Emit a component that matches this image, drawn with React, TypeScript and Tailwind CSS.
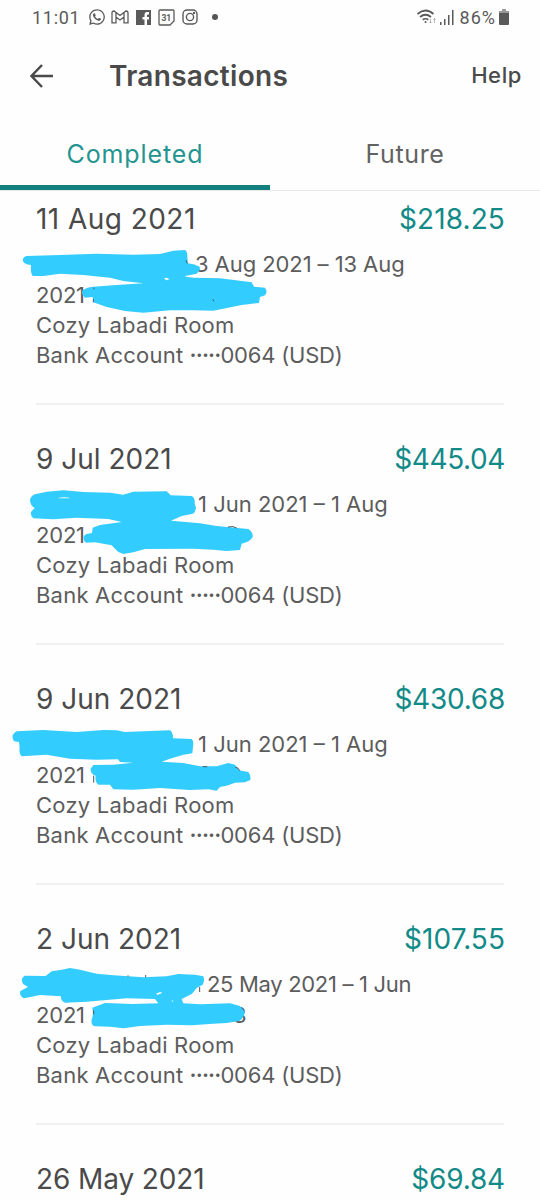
import { FaWhatsapp } from 'react-icons/fa';

type Transaction = {
  date: string;
  amount: string;
  dateSpacing?: number;
  amountSpacing?: number;
  staySpacing?: number;
  stay?: string;
  indent?: number;
  tail?: string;
  scribble?: string;
  gaps?: string; // bare slivers the marker missed
  specks?: string; // bits of lettering that peek out
};

const transactions: Transaction[] = [
  {
    date: '11 Aug 2021',
    dateSpacing: 0.45,
    amount: '$218.25',
    amountSpacing: 0.1,
    stay: '3 Aug 2021 – 13 Aug',
    staySpacing: -0.08,
    indent: 159,
    scribble:
      'M80 183 L180 180 L290 176 L400 179 L480 177 L520 167 L555 165 Q563 170 562 185 L564 205 Q585 208 599 215 Q602 228 590 236 L555 243 Q554 247 580 248 L660 250 L755 262 L762 275 L795 278 Q804 290 795 301 L780 306 L777 324 L725 330 L640 347 L580 346 L510 346 L430 353 L375 348 L320 336 L280 322 L278 306 L255 308 Q244 300 246 288 Q256 277 280 275 L350 270 L430 265 L370 258 L330 248 L250 240 L180 236 L130 243 L98 243 Q91 234 93 210 Q70 208 68 195 Q70 185 80 183 Z',
    gaps: 'M492 251 Q500 245 508 253 L500 256 Z',
    specks: 'M558 196 L562 205 M282 278 V283 M280 312 V322 M638 313 L642 319',
  },
  {
    date: '9 Jul 2021',
    amount: '$445.04',
    amountSpacing: -0.4,
    stay: '1 Jun 2021 – 1 Aug',
    indent: 162,
    scribble:
      'M105 178 L140 170 L190 166 L250 171 L330 173 L370 179 L400 170 L500 169 L512 181 L575 183 Q586 189 584 205 L588 218 Q586 235 575 237 L545 243 L513 257 L600 265 L650 273 L745 282 Q760 292 758 306 Q750 321 725 326 L720 345 L680 348 L640 344 L580 341 L435 342 L400 352 L370 357 L354 350 L335 331 L285 322 L258 323 Q248 315 252 303 Q256 296 276 294 L278 278 L300 270 L365 261 L325 252 L230 248 L160 253 L100 250 Q91 243 93 231 L104 219 Q90 211 90 195 Q92 183 105 178 Z',
    gaps: 'M172 190 Q190 184 208 188 L208 190 Z',
    specks: 'M684 276 Q700 272 710 279',
  },
  {
    date: '9 Jun 2021',
    amount: '$430.68',
    amountSpacing: -0.25,
    stay: '1 Jun 2021 – 1 Aug',
    indent: 162,
    scribble:
      'M50 169 L130 165 L230 171 L310 165 L350 166 L375 171 L470 167 L510 166 Q520 174 519 190 L575 192 Q582 197 579 215 L577 235 L550 239 L510 251 L485 260 L550 264 L600 274 L650 274 L685 264 L705 269 L717 286 L745 291 Q753 300 751 315 L735 322 L705 323 L680 332 L660 336 L650 347 L625 343 L570 345 L480 339 L400 344 L340 343 L330 329 L295 329 Q284 322 287 302 Q270 296 272 281 L280 270 L340 269 L400 263 L360 261 L354 253 L290 254 L210 251 L140 239 L65 244 Q56 236 59 220 L57 201 L42 199 Q30 180 50 169 Z',
    specks: 'M281 302 V323 M706 277 Q716 277 719 287 M608 275 H622',
  },
  {
    date: '2 Jun 2021',
    amount: '$107.55',
    amountSpacing: 0.05,
    stay: '25 May 2021 – 1 Jun',
    staySpacing: -0.32,
    indent: 171,
    tail: '3',
    scribble:
      'M74 182 L137 183 L155 169 L185 164 L210 159 L240 164 L290 176 L340 181 L430 187 L500 184 L535 177 L585 179 L610 184 Q615 196 608 209 L590 219 L576 236 L545 252 L550 265 L600 268 L690 265 L720 273 L734 290 Q735 306 718 318 L680 324 L640 326 L575 331 L500 329 L420 333 L370 340 L330 335 L285 334 Q272 331 275 312 Q281 303 277 278 L315 264 L400 267 L475 265 L465 252 L380 250 L260 260 L195 263 Q182 258 183 244 L120 240 L72 250 Q57 243 61 228 L84 216 L69 207 Q60 190 74 182 Z',
    gaps: 'M468 236 L482 230 L486 234 L472 240 Z M514 259 L518 256 L520 260 Z',
    specks: 'M384 181 V185 M437 180 V187 M599 216 V231 M281 286 V298',
  },
  { date: '26 May 2021', dateSpacing: -0.1, amount: '$69.84', amountSpacing: -0.2 },
];

function StatusBar() {
  return (
    <div className="flex h-[34px] items-center justify-between pl-8 pr-[31px] font-[Roboto] text-[18px] text-[#5a5a5a]">
      <div className="flex items-center">
        <span className="w-14 tracking-[0.7px]">11:01</span>
        <FaWhatsapp size={18} />
        <svg className="ml-[5px]" width="18" height="14" viewBox="0 0 18 14" fill="none" stroke="currentColor" strokeWidth="1.3">
          <path d="M1 12.8V3Q1 1 3 1L9 5.5L15 1Q17 1 17 3V12.8H13V7L9 10L5 7V12.8Z M5 7V3 M13 7V3" />
        </svg>
        <svg className="ml-[7px]" width="15" height="15" viewBox="0 0 15 15">
          <path d="M0 0H15V15H11V9.5H13V7H11V5.5Q11 4.5 12 4.5H13V2H11Q8.5 2 8.5 5V7H6.5V9.5H8.5V15H0Z" fill="currentColor" />
        </svg>
        <svg className="ml-[7px]" width="17" height="17" viewBox="0 0 17 17" fill="none" stroke="currentColor" strokeWidth="1.3">
          <path d="M2 1H15Q16 1 16 2V12L12 16H2Q1 16 1 15V2Q1 1 2 1Z" />
          <text x="8.3" y="11.5" textAnchor="middle" fontSize="8.5" fontWeight="700" fill="currentColor" stroke="none">31</text>
        </svg>
        <svg className="ml-[7px]" width="16" height="16" viewBox="0 0 16 16" fill="none" stroke="currentColor" strokeWidth="1.4">
          <rect x="1" y="1" width="14" height="14" rx="4" />
          <circle cx="8" cy="8" r="3.6" />
          <circle cx="12" cy="4" r=".5" />
        </svg>
        <span className="ml-[14px] size-[6px] rounded-full bg-[#555]" />
      </div>
      <div className="flex items-center">
        <svg width="20" height="16" viewBox="0 0 20 16" fill="none" stroke="currentColor" strokeWidth="1.7">
          <path d="M0.5 5Q8.5 -2 16.5 5 M3 8Q8.5 3.5 14 8 M5.7 10.8Q8.5 8.7 11.3 10.8" />
          <circle cx="8.5" cy="13" r="1" fill="currentColor" stroke="none" />
          <path d="M13.5 10V14 M12.3 12.8L13.5 14L14.7 12.8 M17.5 14V9.5 M16.3 10.8L17.5 9.5L18.7 10.8" strokeWidth=".8" opacity=".5" />
        </svg>
        <svg className="ml-[3px]" width="14" height="15" viewBox="0 0 14 15" fill="currentColor">
          <path d="M0 12H1.5V15H0Z M4 9H5.5V15H4Z M8 5H9.5V15H8Z M12 0H13.5V15H12Z" />
        </svg>
        <span className="ml-[6px] tracking-[1px]">86%</span>
        <svg className="ml-[3px]" width="10" height="16" viewBox="0 0 10 16">
          <path d="M3 0H7V2H10V5H0V2H3Z" fill="#999" />
          <path d="M0 4H10V15Q10 16 9 16H1Q0 16 0 15Z" fill="currentColor" />
        </svg>
      </div>
    </div>
  );
}

function TransactionRow({ date, amount, dateSpacing, amountSpacing, staySpacing, stay, indent, tail, scribble, gaps, specks }: Transaction) {
  return (
    <article className="relative h-60 px-9 pt-1">
      <div className="flex h-10 items-center justify-between text-[28px]">
        <h2 style={{ letterSpacing: dateSpacing }}>{date}</h2>
        <span className="-mr-px text-[#128a87]" style={{ letterSpacing: amountSpacing }}>{amount}</span>
      </div>
      {stay && (
        <>
          <div className="mt-[10px] whitespace-nowrap text-[22px] leading-[30px] text-[#5c5c5c]">
            <p className="h-[31px]" style={{ paddingLeft: indent, letterSpacing: staySpacing }}>{stay}</p>
            <p className="tracking-[-0.2px]">
              2021
              {tail && <span className="ml-[148px]">{tail}</span>}
            </p>
            <p className="tracking-[0.22px]">Cozy Labadi Room</p>
            <p>
              <span className="tracking-[0.22px]">Bank Account</span>{' '}
              <span className="font-semibold tracking-[-0.85px]">·····</span>
              <span className="tracking-[-0.2px]">0064 (USD)</span>
            </p>
          </div>
          <div className="mt-[33px] h-[2px] bg-[#f0f0f0]" />
          <svg className="absolute left-0 top-0" width="290" height="185" viewBox="0 0 870 555">
            <path d={scribble} fill="#33ccff" />
            <path d={gaps} fill="#fefefe" />
            <path d={specks} fill="none" stroke="#4d5a60" strokeWidth="3" />
          </svg>
        </>
      )}
    </article>
  );
}

export default function App() {
  return (
    <div className="h-[1200px] w-[540px] overflow-hidden bg-[#fefefe] font-['Inter',sans-serif] text-[#4a4a4a]">
      <StatusBar />
      <header className="flex h-[84px] items-center pl-[30px] pr-[18px]">
        <svg width="24" height="24" viewBox="0 0 24 24" fill="none" stroke="currentColor" strokeWidth="2.5">
          <path d="M23 12H2 M12 1L1.5 12L12 23" />
        </svg>
        <h1 className="ml-[55px] text-[28px] font-semibold tracking-[0.3px]">Transactions</h1>
        <button className="-mt-0.5 ml-auto text-[22px] font-medium tracking-[0.6px]">Help</button>
      </header>
      <nav className="flex h-[73px] border-b border-[#e8e8e8] text-center text-[25px] tracking-[0.9px]">
        <button className="h-[72px] w-1/2 border-b-[5px] border-[#12807f] pt-[6px] text-[#249491]">Completed</button>
        <button className="h-[72px] w-1/2 border-b-[5px] border-transparent pt-[6px] tracking-[0.6px] text-[#626262]">Future</button>
      </nav>
      <main className="pt-1">
        {transactions.map((t) => (
          <TransactionRow key={t.date} {...t} />
        ))}
      </main>
    </div>
  );
}
